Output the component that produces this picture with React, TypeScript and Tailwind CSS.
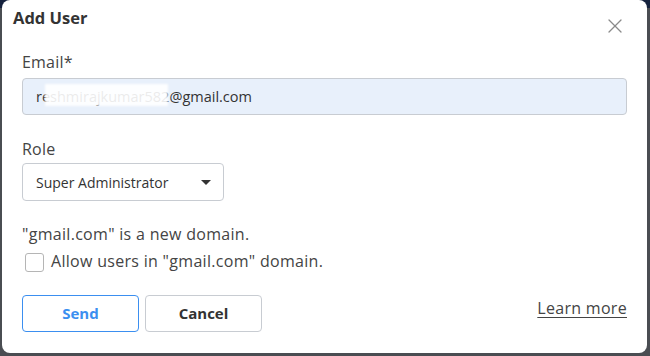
import { X } from 'lucide-react'

const font = { fontFamily: '"Open Sans", "Liberation Sans", sans-serif' }

export default function App() {
  return (
    <div className="w-[650px] h-[356px] bg-[#4a4d52] flex flex-col" style={font}>
      <div className="h-[8px] bg-[#15223d]" />
      <div className="flex-1 bg-[#4a4d52]" />
      <div className="absolute left-[2px] top-0 w-[645px] h-[353px] bg-white rounded-[8px] flex flex-col">
        {/* header */}
        <div className="flex items-start justify-between pl-[11px] pr-[20px] pt-[6px]">
          <h2 className="text-[16.5px] font-bold text-[#333]">Add User</h2>
          <button className="mt-[8px] text-[#8a8a8a]">
            <X className="h-[24px] w-[24px]" strokeWidth={1.3} />
          </button>
        </div>

        <div className="px-[20px] flex flex-col">
          {/* email */}
          <label className="mt-[13px] text-[16px] text-[#444] leading-[22px] tracking-[0.2px]">Email*</label>
          <div className="relative mt-[5px] h-[37px] rounded-[4px] border border-[#c8ccd2] bg-[#e8f0fb] flex items-center px-[13px] text-[14.5px] text-[#333]">
            <span>reshmirajkumar582@gmail.com</span>
            <div className="absolute left-[22px] top-[5px] w-[123px] h-[22px] bg-white/90 blur-[1px]" />
          </div>

          {/* role */}
          <label className="mt-[23px] text-[16px] text-[#444] leading-[22px] tracking-[0.2px]">Role</label>
          <div className="mt-[3px] w-[202px] h-[38px] rounded-[4px] border border-[#c8ccd2] flex items-center justify-between pl-[13px] pr-[12px] text-[14px] text-[#333]">
            <span>Super Administrator</span>
            <span className="w-0 h-0 border-l-[5px] border-r-[5px] border-t-[5px] border-l-transparent border-r-transparent border-t-[#333]" />
          </div>

          {/* domain notice */}
          <p className="mt-[22px] text-[16px] text-[#444] leading-[22px] tracking-[0.3px]">"gmail.com" is a new domain.</p>
          <label className="flex items-center gap-[7px] mt-[5px] text-[16px] text-[#444] leading-[22px] tracking-[0.3px]">
            <span className="ml-[3px] mt-[3px] w-[19px] h-[19px] rounded-[3px] border border-[#b5b5b5]" />
            Allow users in "gmail.com" domain.
          </label>

          {/* actions */}
          <div className="mt-[23px] flex items-center">
            <button className="w-[117px] h-[37px] rounded-[4px] border border-[#3b8ff0] text-[#3b8ff0] text-[15px] font-bold">
              Send
            </button>
            <button className="ml-[6px] w-[117px] h-[37px] rounded-[4px] border border-[#c8ccd2] text-[#333] text-[15px] font-bold">
              Cancel
            </button>
            <a className="ml-auto mb-[12px] text-[16px] text-[#444] underline underline-offset-[3px] tracking-[0.3px]">Learn more</a>
          </div>
        </div>
      </div>
    </div>
  )
}
